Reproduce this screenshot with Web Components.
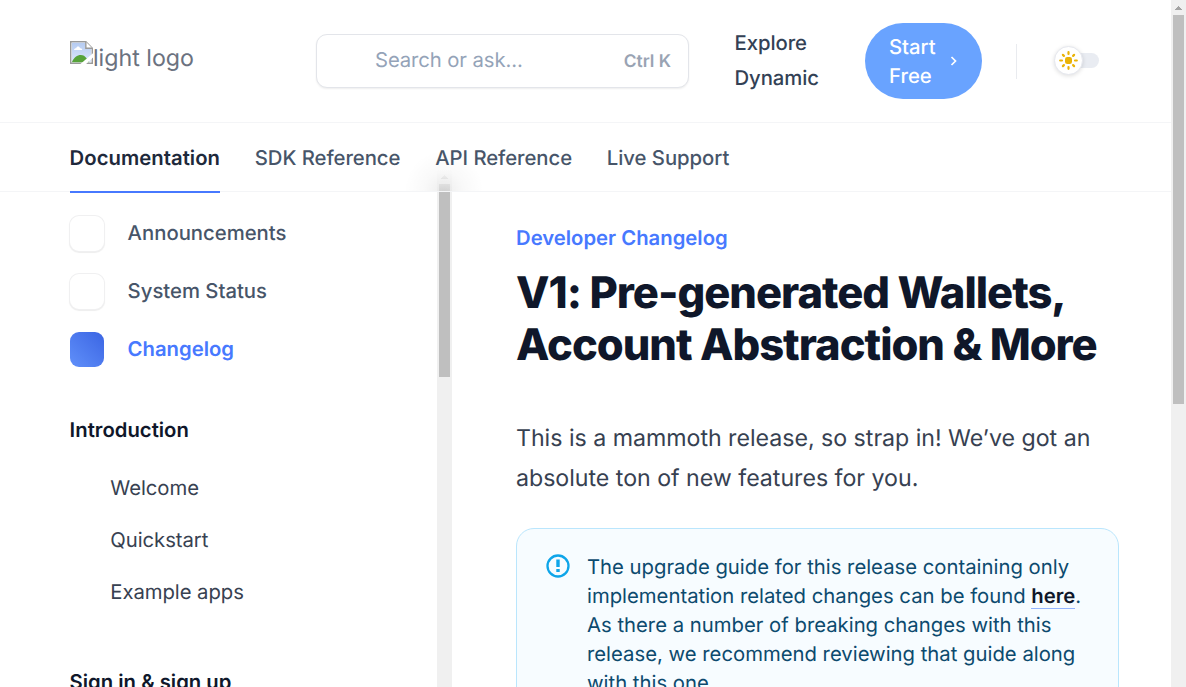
<!DOCTYPE html>
<html lang="en"><head><meta charset="utf-8"><title>Developer Changelog</title>
<style>
html{font-size:23.2px}
body{margin:0;height:687px;overflow:hidden;background:#fff;font-family:Inter,"Liberation Sans",sans-serif;color:#475569;text-rendering:geometricPrecision}
</style></head><body>
<docs-page></docs-page>
<script>
const define=(name,html)=>customElements.define(name,class extends HTMLElement{
  constructor(){super();this.attachShadow({mode:'open'}).innerHTML=html;}
});

define('scroll-bar',`<style>
:host{display:flex;flex-direction:column;align-items:center;width:15px;flex:none;background:#f0f0f0}
svg{display:block;width:15px;height:15px;flex:none}
.thumb{width:11px;height:var(--thumb);background:#bfbfbf}
</style><svg viewBox="0 0 15 15" shape-rendering="crispEdges"><path d="M4 10h7v-1h-1v-1h-1v-1h-1v-1h-1v1h-1v1h-1v1h-1z" fill="#a3a3a3"/></svg><div class="thumb"></div>`);

define('brand-logo',`<style>
:host{display:flex;align-items:flex-start;width:246px;height:40px;flex:none;color:#6b7280;font-size:23.2px;line-height:35px}
svg{flex:none;width:23px;height:23px}
</style><svg viewBox="0 0 16 16"><defs><linearGradient id="s" x2="0" y2="1"><stop stop-color="#b5cbf2"/><stop offset="1" stop-color="#dce7fb"/></linearGradient></defs>
<path d="M.5.5H11L15.500 5v10.500H.5z" fill="#fff" stroke="#9a9a9a"/><path d="M1.300 1.300H10.500V5.500H14.700V14.700H1.300z" fill="url(#s)"/><path d="M1.300 14.700c1.500-3.300 3.700-5 6.200-5 1.700 0 3 .8 4 2.300l2 2.700z" fill="#57a33a"/><path d="M2.800 6.300c0-1.100 1-1.400 1.500-1.300.3-1.600 2.300-1.600 2.700 0 1-.1 1.500.5 1.500 1.300z" fill="#fff"/><path d="M11 .5V5h4.500" fill="#fff" stroke="#9a9a9a"/><path d="M7 16.200L16.200 8.300v3L11 16.200z" fill="#fff"/></svg><span><slot></slot></span>`);

define('search-box',`<style>
:host{box-sizing:border-box;display:flex;align-items:center;justify-content:space-between;width:373px;height:54px;flex:none;border:1px solid #e3e5ea;border-radius:11px;padding:0 17px 0 58px;background:#fff;box-shadow:0 1px 2px rgba(0,0,0,.07);font-size:20.3px;color:#94a3b8}
span{margin-bottom:3px;letter-spacing:-.1px}
b{font-size:17.4px;font-weight:600;color:#99a3b3}
</style><span><slot></slot></span><b>Ctrl K</b>`);

define('start-button',`<style>
:host{box-sizing:border-box;display:flex;align-items:center;width:117px;height:76px;flex:none;background:#69a3ff;border-radius:38px;padding:0 24px;color:#fff;font-size:20.3px;line-height:29px;font-weight:500}
span{width:60px}svg{width:9px;height:12px;flex:none}
</style><span><slot></slot></span><svg viewBox="0 0 9 12"><path d="M2.500 2l4 4-4 4" fill="none" stroke="#fff" stroke-width="1.700"/></svg>`);

define('theme-toggle',`<style>
:host{display:flex;align-items:center;width:46px;height:30px;flex:none;margin-bottom:2px}
.track{display:flex;align-items:center;width:42px;height:15px;margin-left:3px;border-radius:8px;background:#e9ecf2}
.knob{box-sizing:border-box;width:29px;height:29px;margin-left:-3px;flex:none;border:1px solid #e5e7ee;border-radius:50%;background:#fff;box-shadow:0 1px 4px rgba(0,0,0,.13);display:flex;align-items:center;justify-content:center}
svg{width:19px;height:19px;flex:none}
</style><div class="track"><div class="knob"><svg viewBox="0 0 19 19"><rect x="6" y="6" width="7" height="7" rx="2.300" fill="#eab308"/><path d="M9.500 1.200v1.800M9.500 16V17.800M1.200 9.500h1.800M16 9.500H17.800M3.900 3.900l1 1M14.100 14.100l1 1M15.100 3.900l-1 1M4.900 14.100l-1 1" stroke="#eab308" stroke-width="2.200" stroke-linecap="round"/></svg></div></div>`);

define('top-bar',`<style>
:host{box-sizing:border-box;display:flex;align-items:center;height:123px;padding:0 70px;border-bottom:1px solid #f4f5f7}
.explore{width:84px;margin:0 46.500px 2px 45.500px;font-size:20.3px;line-height:35px;letter-spacing:-.06px;font-weight:500;color:#334155}
.sep{width:1px;height:35px;margin:0 37px 0 34px;background:#e9ebef}
</style><brand-logo>light logo</brand-logo><search-box>Search or ask...</search-box><div class="explore">Explore Dynamic</div><start-button>Start Free</start-button><div class="sep"></div><theme-toggle></theme-toggle>`);

define('nav-tab',`<style>
:host{box-sizing:border-box;display:block;height:70px;padding-top:20px;line-height:30px;font-size:20.3px;letter-spacing:-.04px;font-weight:500;color:#475569;white-space:nowrap}
:host([active]){font-weight:600;letter-spacing:.03px;color:#1e293b;border-bottom:2px solid #4779ff}
</style><slot></slot>`);

define('tab-bar',`<style>
:host{box-sizing:border-box;display:flex;gap:34.800px;height:69px;padding-left:69.600px;border-bottom:1px solid #f4f5f7;position:relative;z-index:1;
background:radial-gradient(ellipse 40px 42px at 444px 69px,rgba(0,0,0,.07),rgba(0,0,0,.025) 50%,transparent),linear-gradient(#fff 46px,rgba(255,255,255,.85) 54px,rgba(255,255,255,.55))}
</style><nav-tab active>Documentation</nav-tab><nav-tab>SDK Reference</nav-tab><nav-tab>API Reference</nav-tab><nav-tab>Live Support</nav-tab>`);

define('anchor-link',`<style>
:host{display:flex;align-items:center;gap:24px;height:36px;margin-bottom:22px;font-size:20.3px;font-weight:500;color:#475569}
i{box-sizing:border-box;width:34px;height:35px;border-radius:9px;background:#fff;box-shadow:0 0 0 1px #f0f0f1,0 1px 1px 1px rgba(0,0,0,.07)}
span{margin:0 0 2px -.4px}
:host([active]){font-weight:600;color:#4779ff}
:host([active]) i{background:linear-gradient(45deg,#6090fa,#3b65e3);box-shadow:none}
</style><i></i><span><slot></slot></span>`);

define('side-heading',`<style>
:host{display:block;margin-left:-.4px;font-size:20.3px;line-height:29px;font-weight:600;color:#0f172a}
</style><slot></slot>`);
define('side-link',`<style>
:host{display:block;padding-left:40.3px;font-size:20.3px;letter-spacing:-.06px;line-height:29px;margin-bottom:23px;color:#374151}
</style><slot></slot>`);

define('side-nav',`<style>
:host{display:flex;width:452px;height:495px;flex:none}
.list{flex:1;padding:23px 0 0 70px}
.intro{margin-top:48px;margin-bottom:29px}.sign{margin-top:61px}
scroll-bar{margin-top:-23px}
</style><div class="list"><anchor-link>Announcements</anchor-link><anchor-link>System Status</anchor-link><anchor-link active>Changelog</anchor-link>
<side-heading class="intro">Introduction</side-heading><side-link>Welcome</side-link><side-link>Quickstart</side-link><side-link>Example apps</side-link><side-heading class="sign">Sign in &amp; sign up</side-heading></div><scroll-bar></scroll-bar>`);

define('info-callout',`<style>
:host{box-sizing:border-box;display:flex;gap:17.500px;width:603px;height:240px;padding:24px 28.500px;border:1px solid #bae6fd;border-radius:18px;background:#f7fcff;color:#0c4a6e;font-size:20.3px;line-height:29px}
svg{width:24px;height:24px;flex:none;margin-top:1px}
div{margin-top:-1px;white-space:nowrap}
</style><svg viewBox="0 0 24 24"><circle cx="12" cy="12" r="10.500" fill="none" stroke="#0ea5e9" stroke-width="2.300"/><path d="M10.300 5.500h3.400v7.500h-3.400zM10.300 15h3.400v3h-3.400z" fill="#0ea5e9"/></svg><div><slot></slot></div>`);

define('article-body',`<style>
:host{display:block;padding:31px 0 0 64px;width:655px}
.eyebrow{font-size:20.3px;line-height:29px;font-weight:600;color:#4779ff}
h1{margin:15px 0 0;font-size:43.5px;line-height:52.2px;font-weight:800;letter-spacing:-1.020px;color:#0f172a}
p{margin:47px 0 30px;font-size:23.2px;line-height:40px;letter-spacing:-.03px;color:#374151}
b{font-weight:600;color:#0f172a;border-bottom:1px solid #94b5ff}
</style><div class="eyebrow">Developer Changelog</div><h1>V1: Pre-generated Wallets,<br>Account Abstraction &amp; More</h1><p>This is a mammoth release, so strap in! We’ve got an<br>absolute ton of new features for you.</p>
<info-callout>The upgrade guide for this release containing only<br>implementation related changes can be found <b>here</b>.<br>As there a number of breaking changes with this<br>release, we recommend reviewing that guide along<br>with this one.</info-callout>`);

define('docs-page',`<style>
:host{display:flex;height:687px;overflow:hidden}
main{width:1171px;flex:none;overflow:hidden}
.cols{display:flex}
scroll-bar{--thumb:389px}
side-nav{--thumb:193px}
</style><main><top-bar></top-bar><tab-bar></tab-bar><div class="cols"><side-nav></side-nav><article-body></article-body></div></main><scroll-bar></scroll-bar>`);
</script></body></html>
